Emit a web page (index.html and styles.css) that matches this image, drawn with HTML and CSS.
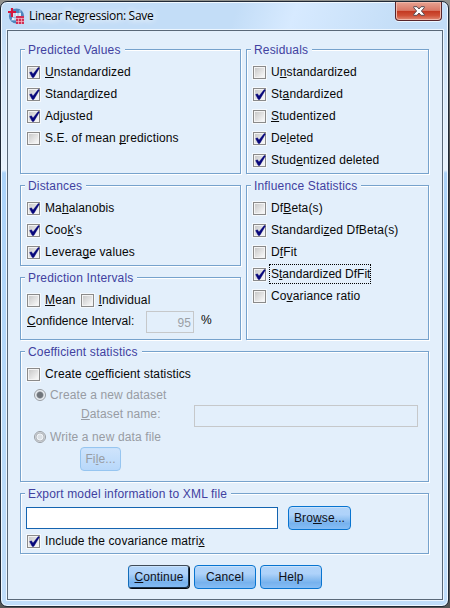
FILE: index.html
```html
<!DOCTYPE html>
<html lang="en">
<head>
<meta charset="utf-8">
<title>Linear Regression: Save</title>
<link rel="stylesheet" href="styles.css">
</head>
<body>
<svg class="defs" width="0" height="0">
  <symbol id="tick" viewBox="0 0 13 13"><path d="M2.6 6.6L4.4 5.8L6 8L11.4 1.3L12.3 2.2L6.8 11.4H5.2Z" fill="#08087c" stroke="#08087c" stroke-width=".4"/></symbol>
</svg>
<div class="window">
  <header class="titlebar">
    <svg class="app-icon" width="17" height="17" viewBox="0 0 17 17">
      <circle cx="8.5" cy="8" r="7.6" fill="#4f86bd"/>
      <path d="M3 12H14M12 2V8" stroke="#a9cbe9" stroke-width="1"/>
      <path d="M5 5H13V8H8V12H4V8" fill="#e4f0fb"/>
      <path d="M7 5V12M10 5V8M4 9.5H8" stroke="#88b2da" stroke-width=".8"/>
      <path d="M4 0V9M0 4H8" stroke="#d3173e" stroke-width="2.2"/>
      <rect x="8" y="8" width="8" height="8" fill="#cf2f55"/>
      <path d="M8 10.5H16M8 13.5H16M10.5 10V16M13.5 10V16" stroke="#f3bdca" stroke-width=".7"/>
    </svg>
    <h1>Linear Regression: Save</h1>
    <button class="close" aria-label="Close"><svg width="12" height="10" viewBox="0 0 12 10"><path d="M.7 .7H4L6 3L8 .7H11.3V1.7L8.4 5L11.3 8.3V9.3H8L6 7L4 9.3H.7V8.3L3.6 5L.7 1.7Z" fill="#fff" stroke="#574b52" stroke-width="1"/></svg></button>
  </header>
  <main class="client">
    <div class="columns">
      <div class="stack">
        <section class="group predicted"><h2>Predicted Values</h2>
          <label><i class="box"><svg><use href="#tick"/></svg></i><span><u>U</u>nstandardized</span></label>
          <label><i class="box"><svg><use href="#tick"/></svg></i><span>Standa<u>r</u>dized</span></label>
          <label><i class="box"><svg><use href="#tick"/></svg></i><span>Ad<u>j</u>usted</span></label>
          <label><i class="box"></i><span>S.E. of mean <u>p</u>redictions</span></label>
        </section>
        <section class="group distances"><h2>Distances</h2>
          <label><i class="box"><svg><use href="#tick"/></svg></i><span>Ma<u>h</u>alanobis</span></label>
          <label><i class="box"><svg><use href="#tick"/></svg></i><span>Coo<u>k</u>'s</span></label>
          <label><i class="box"><svg><use href="#tick"/></svg></i><span>Levera<u>g</u>e values</span></label>
        </section>
        <section class="group intervals"><h2>Prediction Intervals</h2>
          <div class="pair">
            <label><i class="box"></i><span><u>M</u>ean</span></label>
            <label><i class="box"></i><span><u>I</u>ndividual</span></label>
          </div>
          <div class="confidence"><span class="caption"><u>C</u>onfidence Interval:</span><span class="field disabled percent">95</span><span class="unit">%</span></div>
        </section>
      </div>
      <div class="stack">
        <section class="group residuals"><h2>Residuals</h2>
          <label><i class="box"></i><span>U<u>n</u>standardized</span></label>
          <label><i class="box"><svg><use href="#tick"/></svg></i><span>St<u>a</u>ndardized</span></label>
          <label><i class="box"></i><span><u>S</u>tudentized</span></label>
          <label><i class="box"><svg><use href="#tick"/></svg></i><span>De<u>l</u>eted</span></label>
          <label><i class="box"><svg><use href="#tick"/></svg></i><span>Stud<u>e</u>ntized deleted</span></label>
        </section>
        <section class="group influence"><h2>Influence Statistics</h2>
          <label><i class="box"></i><span>Df<u>B</u>eta(s)</span></label>
          <label><i class="box"><svg><use href="#tick"/></svg></i><span>Standardi<u>z</u>ed DfBeta(s)</span></label>
          <label><i class="box"></i><span>D<u>f</u>Fit</span></label>
          <label><i class="box"><svg><use href="#tick"/></svg></i><span class="focused">S<u>t</u>andardized DfFit</span></label>
          <label><i class="box"></i><span>Co<u>v</u>ariance ratio</span></label>
        </section>
      </div>
    </div>
    <section class="group coefficients"><h2>Coefficient statistics</h2>
      <label><i class="box"></i><span>Create c<u>o</u>efficient statistics</span></label>
      <div class="options">
        <label><i class="radio on"></i><span>Create a new dataset</span></label>
        <div class="dataset"><span class="caption"><u>D</u>ataset name:</span><span class="field disabled"></span></div>
        <label><i class="radio"></i><span>Write a new data file</span></label>
        <button class="btn file" disabled>Fi<u>l</u>e...</button>
      </div>
    </section>
    <section class="group export"><h2>Export model information to XML file</h2>
      <div class="path"><span class="field"></span><button class="btn browse">Bro<u>w</u>se...</button></div>
      <label><i class="box"><svg><use href="#tick"/></svg></i><span>Include the covariance matri<u>x</u></span></label>
    </section>
    <footer class="actions">
      <button class="btn primary"><u>C</u>ontinue</button>
      <button class="btn">Cancel</button>
      <button class="btn">Help</button>
    </footer>
  </main>
</div>
</body>
</html>
```
FILE: styles.css
```css
* { box-sizing: border-box; }
body {
  margin: 0;
  width: 450px;
  height: 608px;
  overflow: hidden;
  background: linear-gradient(#92928e, #444 30%, #555);
  font: 12px/13px "Liberation Sans", Arial, sans-serif;
  letter-spacing: .12px;
  color: #080808;
}
.defs { display: block; }
.window {
  width: 449px;
  height: 606px;
  margin-top: 1px;
  border: 1px solid #202936;
  border-radius: 7px;
  padding: 0 6px;
  background:
    linear-gradient(110deg, transparent 52%, #d7eaff 65%, transparent 90%) 0 0 / 100% 29px no-repeat,
    linear-gradient(#c3ddf7 0, #c3ddf7 30px, #d8e9fa 90px, #e9f3fd 168px, #acd3f9 171px, #b8dafa 440px, #c0ddfa);
  box-shadow: inset 0 0 0 1px #f0f8ff;
}
.titlebar {
  display: flex;
  height: 28px;
  align-items: flex-start;
}
.app-icon { margin: 6px 0 0 1px; }
.titlebar h1 {
  margin: 5px 0 0 4px;
  font: 12px/18px "Open Sans", "Noto Sans", sans-serif;
  letter-spacing: -.32px;
  color: #000;
  text-shadow: 0 0 6px #fff, 0 0 8px #fff;
}
.close {
  width: 47px;
  height: 19px;
  margin: 0 0 0 auto;
  padding: 0;
  display: flex;
  align-items: center;
  justify-content: center;
  border: 1px solid #57252b;
  border-top: 0;
  border-radius: 0 0 4px 4px;
  background: linear-gradient(#e7a392, #d97866 47%, #c23720 50%, #cf5037 75%, #e18b75);
  box-shadow: inset 0 0 0 1px #f0b8aa, 0 1px #eef7ff;
}
.client {
  width: 436px;
  height: 570px;
  border: 1px solid #596878;
  padding: 18px 13px 0 12px;
  background: #e3effb;
  box-shadow: 0 0 0 1px #edf6ff;
  display: flex;
  flex-direction: column;
  gap: 11px;
}
.columns { display: grid; grid-template-columns: 221px 183px; gap: 5px; }
.stack { display: flex; flex-direction: column; gap: 11px; }
.group {
  display: flex;
  flex-direction: column;
  gap: 9px;
  border: 1px solid #76a2cc;
  padding: 0 6px;
  box-shadow: 1px 1px #fff, inset 1px 1px #fff;
}
.group h2 {
  align-self: flex-start;
  height: 15px;
  margin: -8px 0 0 -2px;
  padding: 1px 4px 0 3px;
  background: #e3effb;
  color: #4141a0;
  font: inherit;
  line-height: 14px;
  letter-spacing: .17px;
}
.predicted, .residuals { height: 125px; }
.distances { height: 81px; }
.intervals { height: 63px; }
.influence { height: 155px; }
.coefficients { height: 131px; }
.export { height: 61px; }
label { display: flex; gap: 5px; height: 13px; white-space: nowrap; }
u { text-decoration: underline 1px; text-underline-offset: 1px; text-decoration-skip-ink: none; }
.box {
  flex: none;
  width: 13px;
  height: 13px;
  border: 1px solid #8a8a8a;
  background: linear-gradient(135deg, #c4c4c4, #f5f5f5 85%);
  box-shadow: inset 0 0 0 1px #f4f4f4, 0 0 0 1px #f5f9fd;
}
.box svg { display: block; width: 13px; height: 13px; margin: -1px; overflow: visible; }
.focused { height: 20px; margin: -4px 0 0 -2px; padding: 3px 0 0 1px; border: 1px dotted #000; width: 102px; letter-spacing: 0; }
.pair { display: flex; gap: 5px; }
.confidence { display: flex; margin-top: -5px; height: 22px; }
.confidence .caption { width: 119px; padding-top: 4px; letter-spacing: .03px; white-space: nowrap; }
.unit { margin: 3px 0 0 7px; }
.field { display: block; height: 22px; border: 1px solid #1464b0; background: #fff; }
.field.disabled { border-color: #c6c8ca; background: transparent; color: #9b9fa6; }
.percent { width: 48px; padding: 5px 2px 0 0; text-align: right; }
.options { display: flex; flex-direction: column; padding-left: 7px; margin-top: -1px; color: #989ca3; }
.options label { gap: 4px; }
.radio {
  width: 12px;
  height: 12px;
  border: 1px solid #999da2;
  border-radius: 50%;
  background: radial-gradient(circle, #dbe0e5 0 2px, #f4f7fa 3px, #a8acb1 4px, #e8edf2 5px);
}
.radio.on { background: radial-gradient(circle, #70757b 0 2.5px, #888d93 3px, #e7ebef 4px, #eef2f6 5px); }
.dataset { display: flex; height: 22px; margin: 3px 0 4px 47px; }
.dataset .caption { width: 113px; padding-top: 3px; }
.dataset .field { width: 224px; }
.btn {
  height: 24px;
  width: 62px;
  padding: 1px 0 0;
  border: 1px solid #0874d0;
  border-radius: 4px;
  background: linear-gradient(#b2d4f8, #aed2fa 35%, #93c2f2 55%, #77b2ee 75%, #86bdf5);
  box-shadow: inset 0 1px #c9e2fb;
  color: #101018;
  font: inherit;
  line-height: 15px;
  letter-spacing: .12px;
}
.btn.file {
  width: 41px;
  margin: 3px 0 0 46px;
  border-color: #96c5f0;
  background: linear-gradient(#cfe4fc, #b8d8fa);
  color: #989ca3;
}
.path { display: flex; height: 24px; margin: -4px 0 -4px -1px; }
.path .field { width: 252px; margin-top: 1px; }
.path .browse { width: 63px; margin-left: 10px; }
.actions { display: flex; gap: 4px; margin-left: 108px; }
.btn.primary { border-color: #404c59 #05080c #05080c #126dba; box-shadow: inset -1px -1px #18324c, inset 0 1px #c9e2fb; }
```
